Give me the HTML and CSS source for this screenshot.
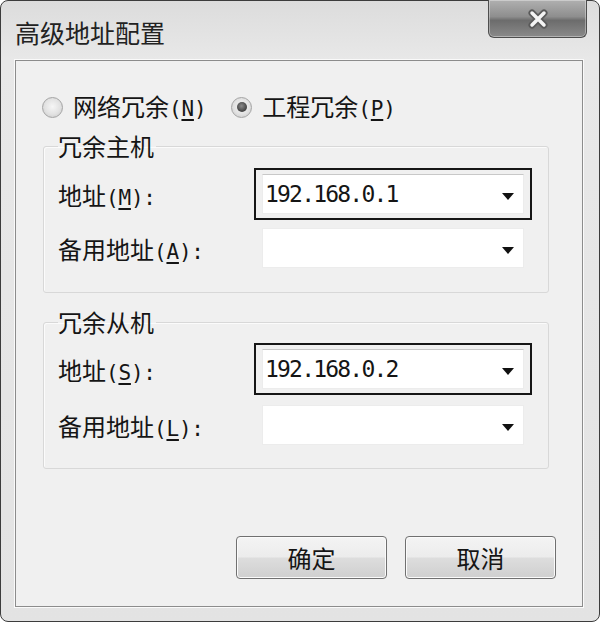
FILE: index.html
```html
<!DOCTYPE html>
<html lang="zh-CN">
<head>
    <meta charset="UTF-8">
    <title>高级地址配置</title>
    <link rel="stylesheet" href="styles.css">
</head>
<body>
    <div class="window">
        <div class="titlebar">
            <span class="title">高级地址配置</span>
            <button class="close-btn" aria-label="关闭">
                <svg width="24" height="20" viewBox="0 0 24 20">
                    <path d="M6 4 L18 16 M18 4 L6 16" stroke="#5a5a5a" stroke-width="7" stroke-linecap="round"/>
                    <path d="M6 4 L18 16 M18 4 L6 16" stroke="#f4f4f4" stroke-width="3.5" stroke-linecap="round"/>
                </svg>
            </button>
        </div>
        <div class="client">
            <div class="radio-row">
                <label class="radio">
                    <span class="dot"></span>
                    <span>网络冗余<span class="key">(<u>N</u>)</span></span>
                </label>
                <label class="radio checked">
                    <span class="dot"></span>
                    <span>工程冗余<span class="key">(<u>P</u>)</span></span>
                </label>
            </div>

            <fieldset class="group first">
                <legend>冗余主机</legend>
                <div class="row">
                    <span class="label">地址<span class="key">(<u>M</u>):</span></span>
                    <div class="combo focused">
                        <div class="field"><span class="value">192.168.0.1</span><span class="arrow"></span></div>
                    </div>
                </div>
                <div class="row">
                    <span class="label">备用地址<span class="key">(<u>A</u>):</span></span>
                    <div class="combo">
                        <div class="field"><span class="value"></span><span class="arrow"></span></div>
                    </div>
                </div>
            </fieldset>

            <fieldset class="group second">
                <legend>冗余从机</legend>
                <div class="row">
                    <span class="label">地址<span class="key">(<u>S</u>):</span></span>
                    <div class="combo focused">
                        <div class="field"><span class="value">192.168.0.2</span><span class="arrow"></span></div>
                    </div>
                </div>
                <div class="row">
                    <span class="label">备用地址<span class="key">(<u>L</u>):</span></span>
                    <div class="combo">
                        <div class="field"><span class="value"></span><span class="arrow"></span></div>
                    </div>
                </div>
            </fieldset>

            <div class="buttons">
                <button class="btn">确定</button>
                <button class="btn">取消</button>
            </div>
        </div>
    </div>
</body>
</html>
```

FILE: styles.css
```css
body {
    margin: 0;
    padding: 0;
    background-color: #ffffff;
    font-family: "Noto Sans CJK SC", "Noto Sans", sans-serif;
    color: #151515;
}
.window {
    width: 600px;
    height: 622px;
    box-sizing: border-box;
    border: 1px solid #3c3c3c;
    border-radius: 8px;
    background: linear-gradient(#dcdcdc, #e8e8e8 58px, #e3e3e3);
    padding: 0 16px 14px 14px;
    display: flex;
    flex-direction: column;
}
.titlebar {
    height: 59px;
    flex-shrink: 0;
    display: flex;
    justify-content: space-between;
    align-items: flex-start;
}
.title {
    font-size: 25px;
    line-height: 30px;
    margin-top: 16px;
    color: #222;
}
.close-btn {
    width: 99px;
    height: 38px;
    margin: -1px -4px 0 0;
    padding: 0;
    border: 1px solid #4e4e4e;
    border-top: none;
    border-radius: 0 0 6px 6px;
    background: linear-gradient(#b0b0b0, #8e8e8e 45%, #6c6c6c 55%, #8a8a8a);
    box-shadow: inset 0 0 0 1px rgba(255, 255, 255, 0.35);
    display: flex;
    align-items: center;
    justify-content: center;
}
.client {
    flex: 1;
    border: 1px solid #8c8c8c;
    box-shadow: 0 0 0 1px #fafafa;
    background: #f0f0f0;
    padding: 0 26px 27px 26px;
    display: flex;
    flex-direction: column;
}
.key {
    font-family: "DejaVu Sans Mono", monospace;
    font-size: 21px;
    letter-spacing: -0.2px;
}
.key u {
    text-underline-offset: 3px;
}
.radio-row {
    margin-top: 32px;
    height: 28px;
    display: flex;
    align-items: center;
    font-size: 24px;
    line-height: 28px;
}
.radio {
    display: flex;
    align-items: center;
    gap: 10px;
    margin-right: 25px;
}
.dot {
    width: 21px;
    height: 21px;
    box-sizing: border-box;
    border-radius: 50%;
    border: 1px solid #a4a4a4;
    background: radial-gradient(circle at 50% 45%, #f6f6f6 0, #e2e2e2 55%, #c4c4c4 100%);
    display: flex;
    align-items: center;
    justify-content: center;
}
.radio.checked .dot::after {
    content: "";
    width: 10px;
    height: 10px;
    border-radius: 50%;
    background: radial-gradient(circle at 45% 40%, #8a8a8a 0, #4a4a4a 60%, #2e2e2e 100%);
}
.group {
    width: 506px;
    box-sizing: border-box;
    margin: 12px 0 0 1px;
    border: 1px solid #d8d8d8;
    border-radius: 3px;
    box-shadow: inset 1px 1px 0 #fbfbfb;
    padding: 9px 15px 18px 14px;
}
.group.second {
    margin-top: 16px;
    padding-top: 8px;
    padding-bottom: 17px;
}
.group legend {
    font-size: 24px;
    line-height: 26px;
    padding: 0 2px 0 0;
}
.row {
    display: flex;
    align-items: center;
    font-size: 24px;
}
.row + .row {
    margin-top: 2px;
}
.group.second .row + .row {
    margin-top: 4px;
}
.label {
    width: 196px;
    flex-shrink: 0;
}
.combo {
    border: 2px solid transparent;
    padding: 4px 6px;
}
.combo.focused {
    border-color: #161616;
}
.field {
    width: 262px;
    height: 40px;
    box-sizing: border-box;
    background: #ffffff;
    border: 1px solid #ececec;
    display: flex;
    align-items: center;
    justify-content: space-between;
}
.combo.focused .field {
    border-top-color: #c8c8c8;
}
.value {
    font-family: "DejaVu Sans Mono", monospace;
    font-size: 23px;
    letter-spacing: -1.8px;
    padding-left: 2px;
}
.arrow {
    width: 0;
    height: 0;
    border-left: 6px solid transparent;
    border-right: 6px solid transparent;
    border-top: 7px solid #111;
    margin: 4px 9px 0 0;
}
.buttons {
    margin-top: auto;
    display: flex;
    justify-content: flex-end;
    gap: 18px;
}
.btn {
    width: 151px;
    height: 43px;
    border: 1px solid #707070;
    border-radius: 4px;
    background: linear-gradient(#f4f4f4, #ececec 48%, #dddddd 52%, #cfcfcf);
    box-shadow: inset 0 0 0 1px #fbfbfb;
    font-family: "Noto Sans CJK SC", sans-serif;
    font-size: 24px;
    color: #151515;
    padding: 0;
}
```
